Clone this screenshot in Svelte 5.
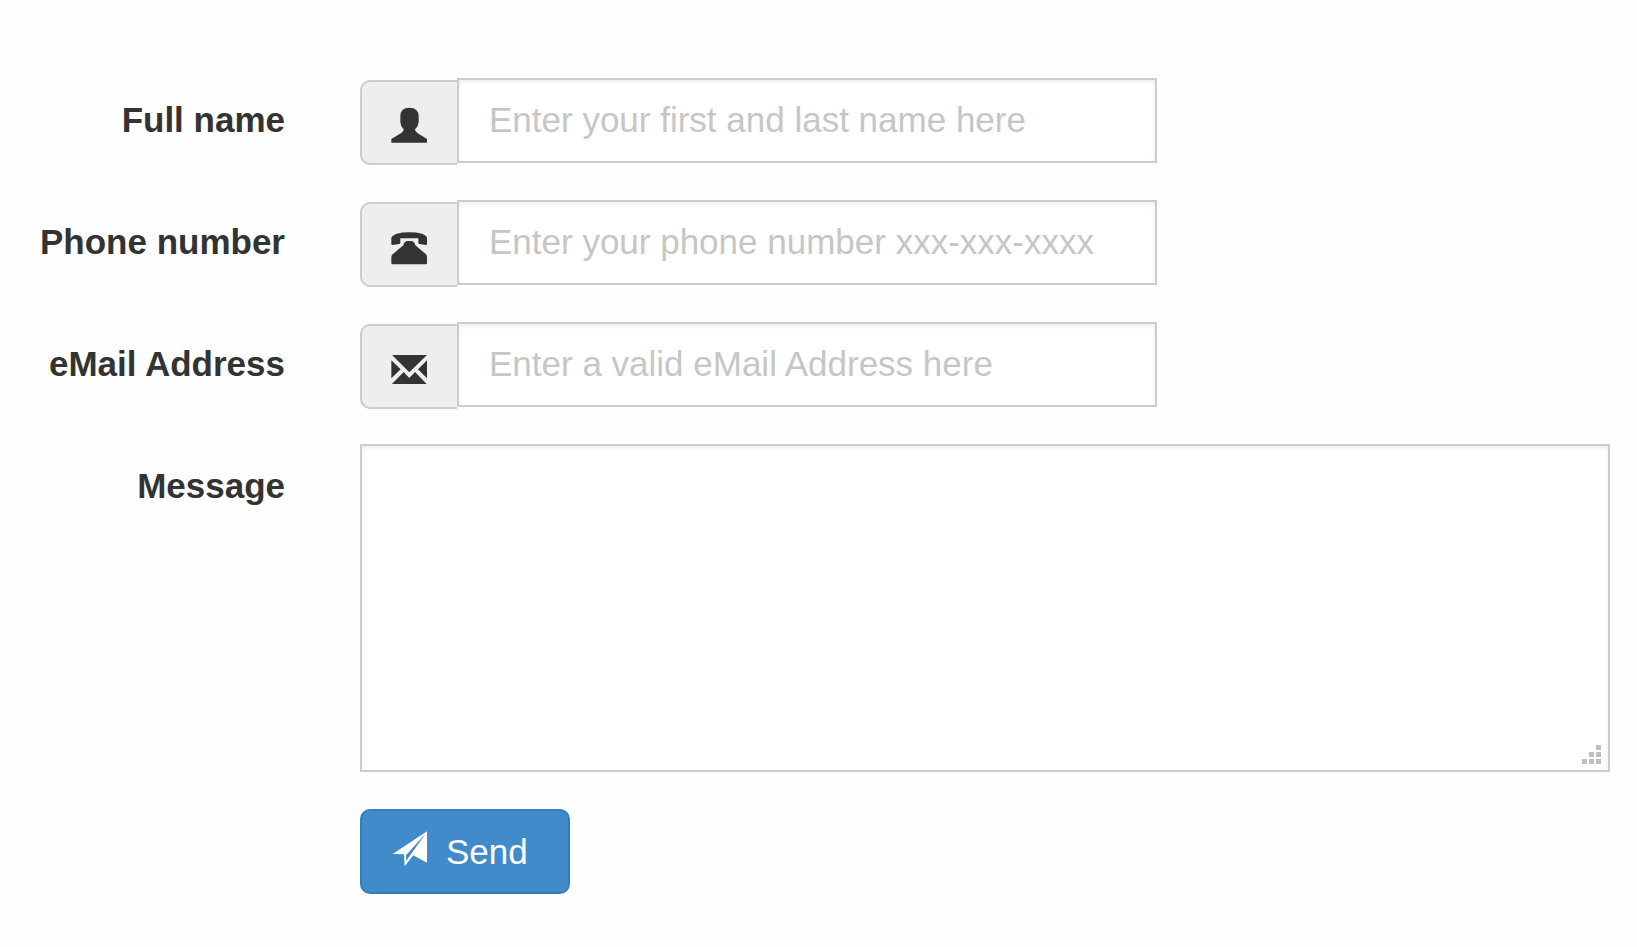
<script>
  const fields = [
    {
      id: 'name', label: 'Full name', type: 'text',
      placeholder: 'Enter your first and last name here',
      viewBox: '123 109 108 108',
      path: 'M124 216V205L154 187Q162 183 161 176Q151 166 151 151V137Q151 111 178 111Q206 111 206 137V151Q206 166 195 176Q195 183 202 187L231 205V216Z'
    },
    {
      id: 'phone', label: 'Phone number', type: 'tel',
      placeholder: 'Enter your phone number xxx-xxx-xxxx',
      viewBox: '123 119 108 108',
      path: 'M124 164V146Q126 138 140 133Q156 129 178 129Q200 129 216 133Q230 138 231 146V164Q231 167 228 167L208 164Q205 163 205 160V147H151V160Q151 163 148 164L128 167Q124 167 124 164ZM151 148V160L160 168Q161 162 165 158Q168 155 172 155H184Q188 155 191 158Q195 162 196 168L228 195Q231 198 231 203V221Q231 225 227 225H128Q124 225 124 221V203Q124 198 128 195L160 168L151 160Z'
    },
    {
      id: 'email', label: 'eMail Address', type: 'email',
      placeholder: 'Enter a valid eMail Address here',
      viewBox: '123 108 108 108',
      path: 'M126 120H231L178 172ZM124 136L152 163L124 190ZM231 136V190L204 163ZM161 171L178 189L195 171L230 207H126Z'
    }
  ];
  const grip = [[14, 0], [7, 7], [14, 7], [0, 14], [7, 14], [14, 14]];
</script>

<form onsubmit={(e) => e.preventDefault()}>
  {#each fields as field}
    <div class="row">
      <label for={field.id}>{field.label}</label>
      <div class="group">
        <span class="addon">
          <svg viewBox={field.viewBox} aria-hidden="true"><path d={field.path} /></svg>
        </span>
        <input id={field.id} type={field.type} placeholder={field.placeholder} />
      </div>
    </div>
  {/each}
  <div class="row">
    <label for="message">Message</label>
    <div class="message">
      <textarea id="message"></textarea>
      <svg class="grip" viewBox="0 0 19 19" aria-hidden="true">
        {#each grip as [x, y]}
          <rect {x} {y} width="5" height="5" />
        {/each}
      </svg>
    </div>
  </div>
  <div class="row">
    <button type="submit">
      <svg viewBox="123 92 108 123" aria-hidden="true">
        <path d="M128 161L231 93V187L190 165L164 198L162 162ZM168 165L169 181L228 98Z" fill-rule="evenodd" />
      </svg>
      Send
    </button>
  </div>
</form>

<style>
  :global(body) {
    background: #fefefe;
  }

  form,
  input,
  textarea,
  button {
    box-sizing: border-box;
    font: 35px/50px "Liberation Sans", Arial, sans-serif;
    color: #333;
  }

  form {
    display: flex;
    flex-direction: column;
    gap: 37px;
    padding: 78px 27px 37px 0;
  }

  .row {
    display: grid;
    grid-template-columns: 285px minmax(0, 1fr);
    column-gap: 75px;
    align-items: start;
  }

  label {
    padding-top: 17px;
    text-align: right;
    font-weight: bold;
  }

  .group {
    display: flex;
    align-items: flex-start;
    max-width: 797px;
  }

  .addon {
    box-sizing: border-box;
    flex: none;
    height: 85px;
    margin: 2px 0 -2px;
    padding: 25px 30px 0 29px;
    border: 2px solid #ccc;
    border-right: 0;
    border-radius: 10px 0 0 10px;
    background: #eee;
  }

  .addon svg {
    display: block;
    width: 36px;
    height: 36px;
    fill: #333;
    overflow: visible;
  }

  input,
  textarea {
    margin: 0;
    border: 2px solid #ccc;
    border-radius: 0;
    background: #fff;
    box-shadow: inset 0 2px 5px rgba(0, 0, 0, 0.075);
    outline: 0;
  }

  input {
    flex: 1;
    min-width: 0;
    height: 85px;
    padding: 0 30px 2px;
  }

  input::placeholder {
    color: #c6c6c6;
    opacity: 1;
  }

  input:focus,
  textarea:focus {
    border-color: #66afe9;
  }

  .message {
    position: relative;
  }

  textarea {
    display: block;
    width: 100%;
    height: 328px;
    padding: 15px 30px;
    resize: none;
  }

  .grip {
    position: absolute;
    right: 9px;
    bottom: 8px;
    width: 19px;
    height: 19px;
    fill: #bfbfbf;
    pointer-events: none;
  }

  button {
    grid-column: 2;
    justify-self: start;
    display: flex;
    align-items: center;
    gap: 19px;
    height: 85px;
    padding: 0 40px 0 29px;
    border: 2px solid #357ebd;
    border-radius: 10px;
    background: #428bca;
    color: #fff;
    cursor: pointer;
  }

  button svg {
    width: 36px;
    height: 41px;
    fill: #fff;
    overflow: visible;
  }
</style>
